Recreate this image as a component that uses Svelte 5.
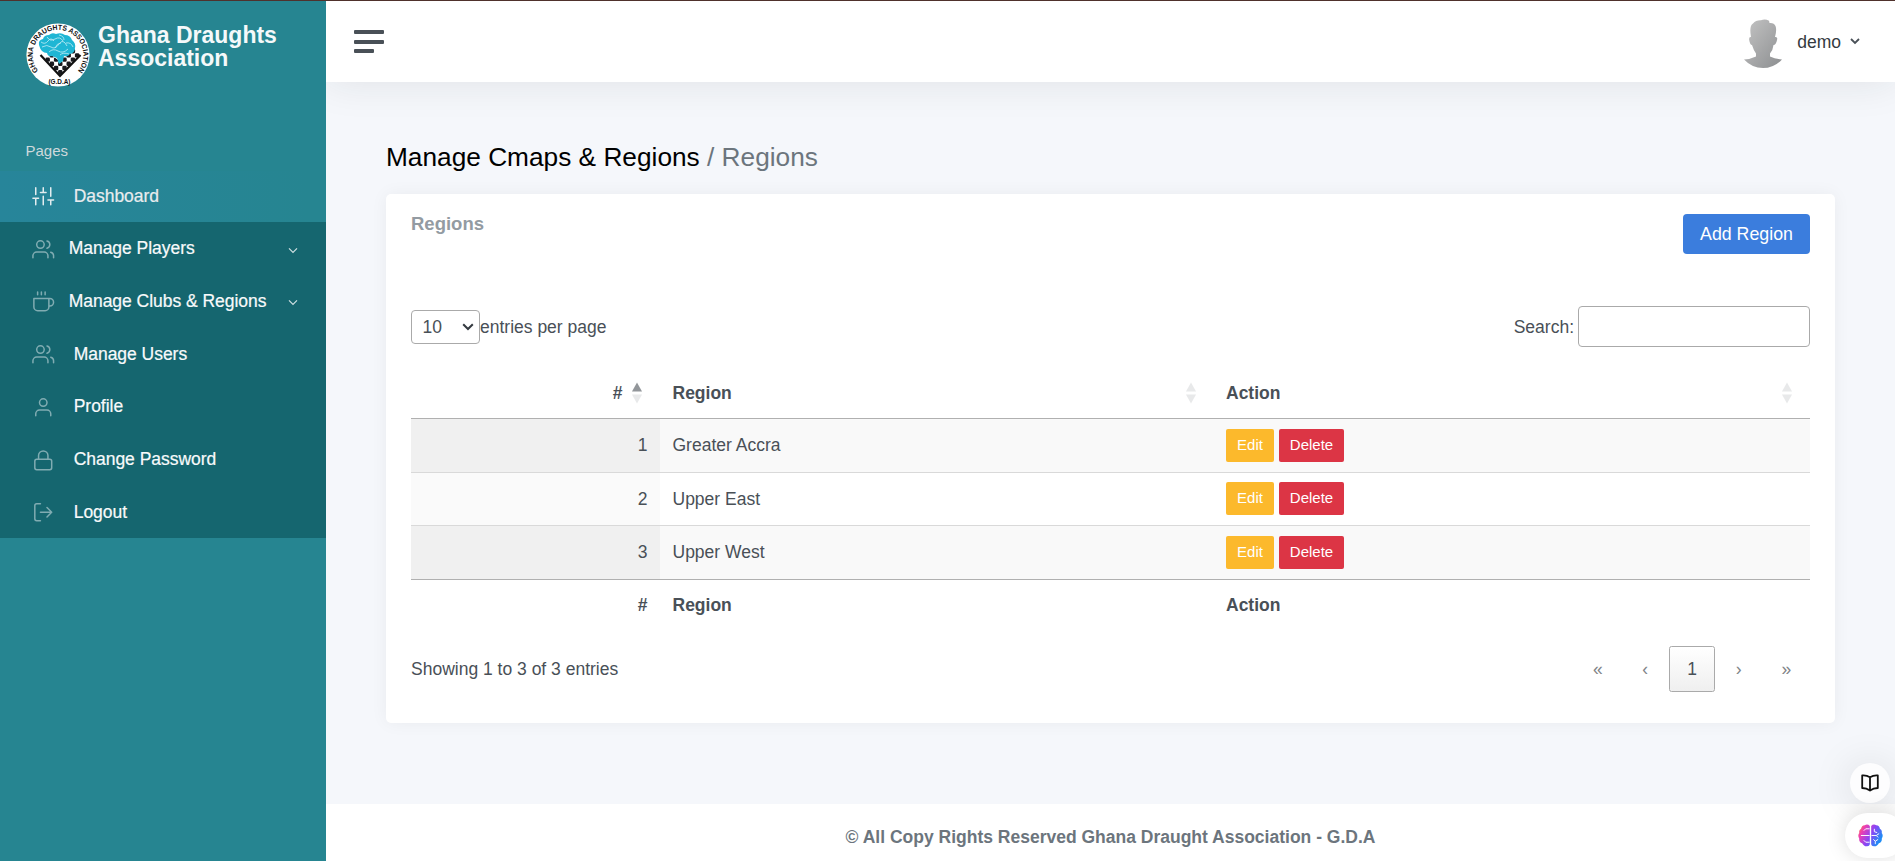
<script>
  const nav = [
    { label: 'Manage Players', icon: 'users', sub: true },
    { label: 'Manage Clubs & Regions', icon: 'coffee', sub: true },
    { label: 'Manage Users', icon: 'users' },
    { label: 'Profile', icon: 'user' },
    { label: 'Change Password', icon: 'lock' },
    { label: 'Logout', icon: 'logout' }
  ];
  const regions = ['Greater Accra', 'Upper East', 'Upper West'];
</script>

{#snippet icon(name)}
  <svg class="ico" viewBox="0 0 24 24">
    {#if name === 'sliders'}
      <path d="M4 21v-7M4 10V3M12 21v-9M12 8V3M20 21v-5M20 12V3M1 14h6M9 8h6M17 16h6" />
    {:else if name === 'users'}
      <path d="M17 21v-2a4 4 0 0 0-4-4H5a4 4 0 0 0-4 4v2M23 21v-2a4 4 0 0 0-3-3.87M16 3.13a4 4 0 0 1 0 7.75" /><circle cx="9" cy="7" r="4" />
    {:else if name === 'coffee'}
      <path d="M18 8h1a4 4 0 0 1 0 8h-1M2 8h16v9a4 4 0 0 1-4 4H6a4 4 0 0 1-4-4V8zM6 1v3M10 1v3M14 1v3" />
    {:else if name === 'user'}
      <path d="M20 21v-2a4 4 0 0 0-4-4H8a4 4 0 0 0-4 4v2" /><circle cx="12" cy="7" r="4" />
    {:else if name === 'lock'}
      <rect x="3" y="11" width="18" height="11" rx="2" /><path d="M7 11V7a5 5 0 0 1 10 0v4" />
    {:else}
      <path d="M9 21H5a2 2 0 0 1-2-2V5a2 2 0 0 1 2-2h4M16 17l5-5-5-5M21 12H9" />
    {/if}
  </svg>
{/snippet}

{#snippet sorter(active)}
  <svg class="sort" viewBox="0 0 10 22"><path d="M0 9.5 5 .5l5 9z" opacity={active ? 0.6 : 0.125} /><path d="M0 12.5h10l-5 9z" opacity=".125" /></svg>
{/snippet}

<div class="app">
  <aside>
    <div class="brand">
      <svg class="logo" viewBox="0 0 64 64">
        <defs>
          <path id="ring" d="M12.200 47.800A25.300 25.300 0 1 1 51.800 47.800" />
          <clipPath id="board"><path d="M15 31 24 31 32 37 47 23 56 32 34 53z" /></clipPath>
        </defs>
        <circle cx="32" cy="32" r="31.6" fill="#fff" />
        <g clip-path="url(#board)" fill="#18191e">
          {#each [0, 1, 2, 3, 4, 5] as r}
            {#each [0, 1, 2, 3, 4, 5, 6, 7] as c}
              {#if (r + c) % 2 === 0}<rect x={19.5 + c * 4.2} y={26 + r * 4.2} width="4.4" height="4.4" rx="1.3" />{/if}
            {/each}
          {/each}
        </g>
        <path d="M14.500 32 34 53 54.500 32" fill="none" stroke="#111" stroke-width="2.200" />
        <path d="M13 22q-1-5 4-6 1-4 6-4 3-3 7-1 5-2 9 1 5 0 7 5 4 3 3 8 0 5-5 6-2 3-6 2l-1 5-4 3-2-6-5-2q-4 1-5-3-6 0-8-8z" fill="#1fb6d4" />
        <path d="M15 19q4 3 7-1t6 0M21 14q3 5 8 2t8 2M16 24q5-3 9 0t8-3 8 2M23 29q4-4 9-1t10-2M33 12q5 1 5 5M34 32q3-3 9-1M40 20q5-1 7 4M29 25q2-5 6-5" fill="none" stroke="#c3eef6" stroke-width=".8" />
        <text class="seal"><textPath href="#ring" startOffset="0" textLength="113" lengthAdjust="spacingAndGlyphs">GHANA DRAUGHTS ASSOCIATION</textPath></text>
        <text class="gda" x="33.500" y="60.500" text-anchor="middle">(G.D.A)</text>
      </svg>
      <div class="name">Ghana Draughts<br />Association</div>
    </div>
    <div class="section">Pages</div>
    <nav>
      <a class="item dash" href="#dashboard">{@render icon('sliders')}<span>Dashboard</span></a>
      <div class="dark">
        {#each nav as n}
          <a class="item" class:sub={n.sub} href="#nav">
            {@render icon(n.icon)}<span>{n.label}</span>
            {#if n.sub}<svg class="caret" viewBox="0 0 10 7"><path d="m1 1.3 4 4 4-4" /></svg>{/if}
          </a>
        {/each}
      </div>
    </nav>
  </aside>

  <div class="main">
    <header>
      <div class="burger"><i></i><i></i><i></i></div>
      <div class="user">
        <svg class="avatar" viewBox="0 0 38 49">
          <defs><linearGradient id="grey" x2="1" y2="1"><stop offset="0" stop-color="#c4c4c4" /><stop offset="1" stop-color="#8c8e90" /></linearGradient></defs>
          <path fill="url(#grey)" d="M7 18Q5 7 9 4.500Q12 1 17 1.300Q21-.5 25 1.700L25.500 4Q30 3.500 31.500 7Q33 11 31 18Q34 17.500 33 21Q32 26 29.500 26Q29 31 26 34.500V37.500Q31 40 38 40.500Q30 49 19 49T0 40.500Q7 40 12 37.500V34.500Q9.500 31 8 26Q6 26 5.200 21Q4.700 17.500 7 18z" />
        </svg>
        <span>demo</span>
        <svg class="uchev" viewBox="0 0 10 7"><path d="m1 1 4 4 4-4" /></svg>
      </div>
    </header>

    <main>
      <h1>Manage Cmaps &amp; Regions <span>/ Regions</span></h1>
      <section class="card">
        <div class="card-head"><h2>Regions</h2><button class="add">Add Region</button></div>
        <div class="tools">
          <div class="select"><span>10</span><svg viewBox="0 0 12 8"><path d="m1.200 1.200 4.800 4.800 4.800-4.800" /></svg></div>
          <span class="per">entries per page</span>
          <span class="search">Search:</span><input aria-label="Search" />
        </div>
        <div class="table">
          <div class="row head">
            <div class="num"><span>#</span>{@render sorter(true)}</div>
            <div><span>Region</span>{@render sorter(false)}</div>
            <div><span>Action</span>{@render sorter(false)}</div>
          </div>
          {#each regions as r, i}
            <div class="row data" class:odd={i % 2 === 0}>
              <div class="num">{i + 1}</div>
              <div>{r}</div>
              <div class="acts"><button class="edit">Edit</button><button class="del">Delete</button></div>
            </div>
          {/each}
          <div class="row foot"><div class="num">#</div><div>Region</div><div>Action</div></div>
        </div>
        <div class="bottom">
          <span>Showing 1 to 3 of 3 entries</span>
          <div class="pages"><b>«</b><b>‹</b><b class="cur">1</b><b>›</b><b>»</b></div>
        </div>
      </section>
    </main>
    <footer>© All Copy Rights Reserved Ghana Draught Association - G.D.A</footer>
  </div>

  <div class="book">
    <svg viewBox="0 0 18 18"><path d="M9 3.200Q5.500 1 1.200 1.400V14Q5.500 14 9 16.500 12.500 14 16.800 14V1.400Q12.500 1 9 3.200zV16" /></svg>
  </div>
  <div class="brain">
    <svg viewBox="0 0 26 24">
      <defs><linearGradient id="neon" x2="1" y2=".5"><stop offset="0" stop-color="#ff8a1f" /><stop offset=".25" stop-color="#ee3fb0" /><stop offset=".6" stop-color="#8b45f5" /><stop offset="1" stop-color="#1f8df5" /></linearGradient></defs>
      <path fill="url(#neon)" d="M12.300 2Q10-.5 7 1.200 3.500 1.500 3.200 5 .5 6.500 1.300 9.500-.7 12 1.200 15 .8 19 4.300 20 6 23.500 9.500 23.200 12 23.200 12.300 21zM13.700 2Q16-.5 19 1.200 22.500 1.500 22.800 5 25.500 6.500 24.700 9.500 26.700 12 24.800 15 25.200 19 21.700 20 20 23.500 16.500 23.200 14 23.200 13.700 21z" />
      <path fill="none" stroke="#fff" stroke-width="1" d="M12 5H8L6 7M3 12H12M6 17l2 2h4M17 5v3l3 1M14 12h5l3-2M19 12l2 2M16 16l2 2v3M18 18l3-2" />
    </svg>
  </div>
</div>

<style>
  :global(body) { margin: 0; overflow: hidden; }
  .app { height: 861px; display: flex; box-sizing: border-box; border-top: 1px solid #4f312c; overflow: hidden; position: relative; font: 17.5px "Liberation Sans", Arial, sans-serif; color: #495057; background: #f5f7fb; }
  * { box-sizing: border-box; }
  aside { width: 326px; flex: none; background: #268591; }
  .brand { display: flex; height: 138px; padding: 22px 0 0 25.500px; }
  .logo { width: 64px; height: 64px; }
  .seal { font-size: 7.300px; font-weight: 700; fill: #111; }
  .gda { font-size: 6.400px; font-weight: 700; fill: #111; }
  .name { margin: 1px 0 0 8.500px; font-size: 23px; line-height: 23px; font-weight: 700; color: #f5f9fa; white-space: nowrap; }
  .section { height: 32px; line-height: 24px; padding-left: 25.500px; font-size: 15px; color: #ced9dc; }
  .item { display: flex; align-items: center; height: 52.660px; padding-left: 32px; color: #f8fafb; text-decoration: none; white-space: nowrap; -webkit-text-stroke: .2px; }
  .item span { margin: 1px 0 0 19.200px; letter-spacing: -.03px; }
  .item.sub span { margin-left: 14.200px; }
  .ico { width: 22.500px; height: 22.500px; flex: none; fill: none; stroke: #80acb2; stroke-width: 1.600; stroke-linecap: round; stroke-linejoin: round; }
  .dark .ico { margin-top: 2px; }
  .dash { height: 51px; color: #e9ecef; background: linear-gradient(90deg, #27859a, #26859600 95%); }
  .dash span { margin-top: -1px; }
  .dash .ico { stroke: #e3edf0; }
  .dark { background: #15666f; height: 316px; }
  .caret { width: 10px; height: 7px; margin: 4px 28px 0 auto; fill: none; stroke: #cfe0e2; stroke-width: 1.200; }
  .main { flex: 1; display: flex; flex-direction: column; overflow: hidden; }
  header { height: 81px; flex: none; display: flex; justify-content: space-between; background: #fff; box-shadow: 0 0 40px rgba(33, 37, 41, .1); padding: 0 35px 0 28px; }
  .burger { padding-top: 29px; }
  .burger i { display: block; width: 30px; height: 4px; margin-bottom: 6px; border-radius: 1px; background: #495057; }
  .burger i:nth-child(2) { margin-bottom: 5px; }
  .burger i:last-child { width: 20px; }
  .user { display: flex; align-items: center; color: #343a40; }
  .user span { margin-top: 1px; }
  .avatar { width: 38px; height: 49px; margin: 3px 15px 0 0; }
  .uchev { width: 10px; height: 7px; margin: 0 0 0 9px; fill: none; stroke: #495057; stroke-width: 1.800; }
  main { flex: 1; padding: 59px 60px 0; }
  h1 { margin: 0; height: 53px; line-height: 32px; font-size: 26.250px; font-weight: 400; color: #000; }
  h1 span { color: #6c757d; }
  .card { height: 529px; padding: 0 25px; background: #fff; border-radius: 5px; box-shadow: 0 0 17.500px rgba(33, 37, 41, .05); }
  .card-head { display: flex; justify-content: space-between; height: 112px; padding-top: 20px; }
  h2 { margin: 0; font-size: 18.500px; line-height: 20px; color: #939ba2; }
  button { border: 0; font: inherit; color: #fff; padding: 0; white-space: nowrap; }
  .add { width: 127px; height: 40px; border-radius: 4px; background: #3b7ddd; font-size: 17.800px; }
  .tools { display: flex; align-items: center; height: 41px; }
  .tools span { position: relative; top: 1px; }
  .select { display: flex; align-items: center; justify-content: space-between; width: 69px; height: 34px; border: 1px solid #aaa; border-radius: 4px; padding: 0 5px 0 10.500px; }
  .select svg { width: 12px; height: 8px; fill: none; stroke: #343a40; stroke-width: 2; }
  .search { margin-left: auto; }
  input { width: 232px; height: 41px; margin-left: 4px; border: 1px solid #aaa; border-radius: 4px; background: #fff; }
  .table { margin-top: 20px; }
  .row { display: grid; grid-template-columns: 249px 554px 1fr; height: 51px; }
  .row > div { display: flex; align-items: center; justify-content: space-between; padding: 0 12.500px; }
  .row > div:last-child { padding-left: 12px; }
  .row .num { justify-content: flex-end; }
  .head, .foot { font-weight: 700; }
  .head { height: 52px; border-bottom: 1px solid #b0b0b0; }
  .head span { margin-top: 2px; }
  .head > div:not(.num) { padding-right: 18px; }
  .head .num { padding-right: 18px; }
  .head .num span { margin-right: 9.500px; }
  .sort { width: 10px; height: 22px; fill: #495057; }
  .data { height: 53px; border-bottom: 1px solid #d9d9d9; }
  .data.odd { height: 54px; background: #f9f9f9; }
  .data .num { background: #fafafa; }
  .data.odd .num { background: #f0f0f0; }
  .data:nth-child(4) { border-color: #b0b0b0; }
  .row .acts { justify-content: flex-start; gap: 5px; }
  .acts button { height: 33px; margin-top: -1px; padding-bottom: 2px; border-radius: 2px; font-size: 15px; }
  .edit { width: 48px; background: #fcb92c; }
  .del { width: 65px; background: #dc3545; }
  .bottom { display: flex; justify-content: space-between; align-items: center; height: 46px; margin-top: 15px; }
  .pages { display: flex; align-items: center; }
  .pages b { width: 47.500px; text-align: center; font-weight: 400; color: #808488; }
  .pages .cur { width: 46px; height: 46px; line-height: 44px; border: 1px solid #aaa; border-radius: 2.500px; background: linear-gradient(#fff, #efefef); color: #495057; }
  footer { height: 57px; line-height: 67px; background: #fff; text-align: center; font-weight: 700; color: #6c757d; }
  .book { position: absolute; left: 1850px; top: 762px; width: 40px; height: 40px; border-radius: 50%; background: #fdfdfe; box-shadow: 0 2px 40px rgba(0, 0, 0, .13); display: grid; place-items: center; }
  .book svg { width: 18px; height: 18px; fill: none; stroke: #111; stroke-width: 1.800; stroke-linejoin: round; }
  .brain { position: absolute; left: 1845px; top: 812px; width: 60px; height: 45px; border-radius: 23px; background: #fff; box-shadow: 0 0 20px rgba(0, 0, 0, .13); padding: 11px 0 0 13px; }
  .brain svg { width: 25px; height: 23px; }
</style>
